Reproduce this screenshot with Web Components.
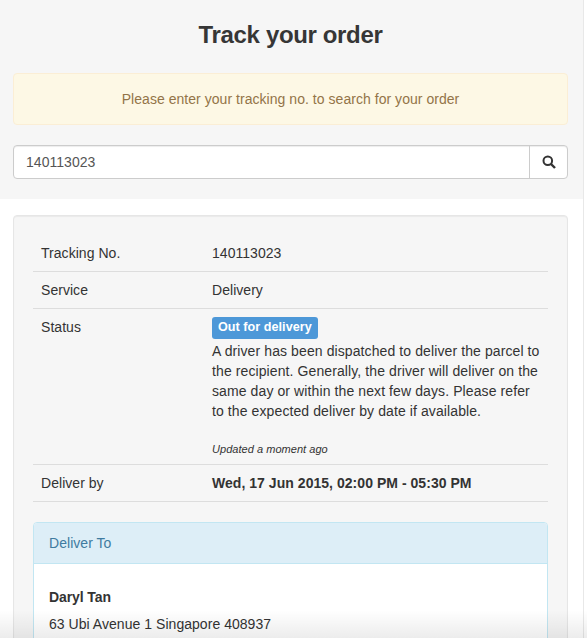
<!DOCTYPE html>
<html><head><meta charset="utf-8"><title>Track your order</title>
<style>
html,body{margin:0;height:638px;overflow:hidden;background:#fff}
body{font:14px/20px "Liberation Sans",Arial,sans-serif;color:#333;letter-spacing:.04px}
</style></head><body>
<track-page>
  <track-header slot="head" title-text="Track your order" notice="Please enter your tracking no. to search for your order" value="140113023"></track-header>
  <track-card>
    <info-row label="Tracking No.">140113023</info-row>
    <info-row label="Service">Delivery</info-row>
    <info-row label="Status">
      <status-badge>Out for delivery</status-badge>
      <div style="margin-top:2px;letter-spacing:.1px">A driver has been dispatched to deliver the parcel to the recipient. Generally, the driver will deliver on the same day or within the next few days. Please refer to the expected deliver by date if available.</div>
      <div style="font-size:11px;font-style:italic;margin-top:22px;height:13px;line-height:13px">Updated a moment ago</div>
    </info-row>
    <info-row label="Deliver by"><b>Wed, 17 Jun 2015, 02:00 PM - 05:30 PM</b></info-row>
    <info-panel heading="Deliver To">
      <div style="font-weight:bold;margin-bottom:7px;letter-spacing:-.1px">Daryl Tan</div>
      <div>63 Ubi Avenue 1 Singapore 408937</div>
    </info-panel>
  </track-card>
</track-page>
<script>
function def(name,html,init){
  customElements.define(name,class extends HTMLElement{
    connectedCallback(){
      if(this.shadowRoot)return;
      const r=this.attachShadow({mode:'open'});
      r.innerHTML=html;
      if(init)init(r,this);
    }
  });
}
def('track-page',`<style>
:host{display:block;width:587px;height:638px;position:relative;overflow:hidden;box-sizing:border-box}
.wrap{width:583px;height:638px;border-right:1px solid #e8e8e8}
.fade{position:absolute;left:0;right:0;bottom:0;height:28px;background:linear-gradient(rgba(0,0,0,0),rgba(0,0,0,.075));pointer-events:none}
.body{padding:16px 15px 0 13px}
</style><div class="wrap"><slot name="head"></slot><div class="body"><slot></slot></div></div><div class="fade"></div>`);
def('track-header',`<style>
:host{display:block;background:#f6f6f6;height:199px;box-sizing:border-box;padding:20px 15px 0 13px}
h2{margin:0;font-size:24px;line-height:30px;font-weight:bold;color:#363636;text-align:center;height:53px;letter-spacing:-.35px}
.alert{height:52px;box-sizing:border-box;background:#fdf8e5;border:1px solid #fbeed5;border-radius:4px;color:#937448;display:flex;align-items:center;justify-content:center}
.group{display:flex;height:34px;margin-top:20px;background:#fff;border:1px solid #ccc;border-radius:4px;box-sizing:border-box;box-shadow:inset 0 1px 1px rgba(0,0,0,.075)}
input{flex:1;min-width:0;border:0;outline:0;background:none;padding:0 12px;font:inherit;letter-spacing:inherit;color:#555}
.btn{width:37px;border-left:1px solid #ccc;display:flex;align-items:center;justify-content:center}
</style><h2></h2><div class="alert"></div><div class="group"><input type="text"><div class="btn"><svg width="14" height="14" viewBox="0 0 14 14" fill="none" stroke="#333"><circle cx="5.8" cy="5.8" r="4.3" stroke-width="2"/><path d="M9 9l4 4" stroke-width="2.4"/></svg></div></div>`,
(r,h)=>{r.querySelector('h2').textContent=h.getAttribute('title-text');
r.querySelector('.alert').textContent=h.getAttribute('notice');
r.querySelector('input').setAttribute('value',h.getAttribute('value'));});
def('track-card',`<style>
:host{display:block;background:#f6f6f6;border:1px solid #e6e6e6;border-radius:4px;box-shadow:inset 0 1px 1px rgba(0,0,0,.05);padding:19px 19px 0;box-sizing:border-box;height:500px}
</style><slot></slot>`);
def('info-row',`<style>
:host{display:grid;grid-template-columns:171px 1fr;border-bottom:1px solid #ddd;padding:8px}
.l{grid-column:1}
</style><div class="l"></div><div><slot></slot></div>`,(r,h)=>{r.querySelector('.l').textContent=h.getAttribute('label');});
def('status-badge',`<style>
:host{display:block;width:fit-content;background:#4d98d8;color:#fff;font-weight:bold;font-size:12.6px;line-height:13px;padding:4px 6px 5px;border-radius:3px}
</style><slot></slot>`);
def('info-panel',`<style>
:host{display:block;margin-top:20px;background:#fff;border:1px solid #c2e6f2;border-radius:4px;overflow:hidden}
.h{background:#ddeef7;color:#3f7ba0;height:41px;box-sizing:border-box;border-bottom:1px solid #c2e6f2;padding:10px 15px;font-size:14px}
.b{padding:23px 15px}
</style><div class="h"></div><div class="b"><slot></slot></div>`,(r,h)=>{r.querySelector('.h').textContent=h.getAttribute('heading');});
</script>
</body></html>
